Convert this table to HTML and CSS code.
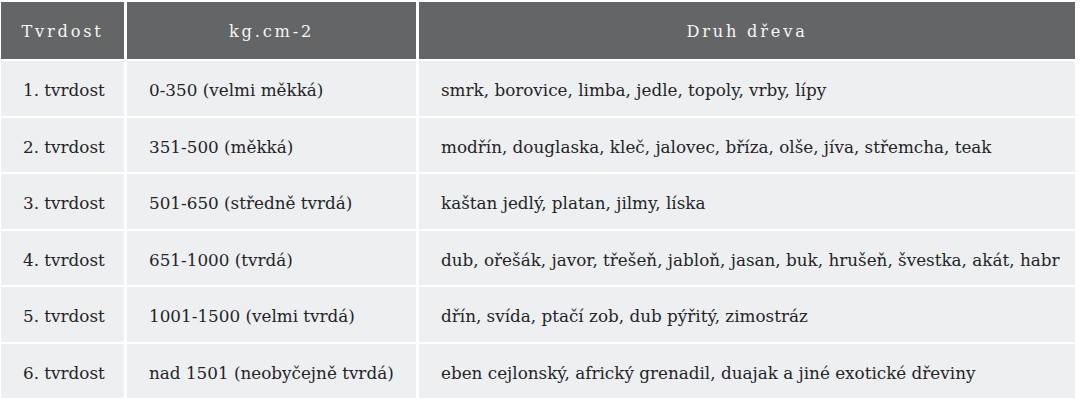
FILE: index.html
```html
<!DOCTYPE html>
<html lang="cs">
<head>
<meta charset="utf-8">
<title>Tvrdost dřeva</title>
<link rel="stylesheet" href="styles.css">
</head>
<body>
<table class="hardness">
  <thead>
    <tr>
      <th class="c1">Tvrdost</th>
      <th class="c2">kg.cm-2</th>
      <th class="c3">Druh dřeva</th>
    </tr>
  </thead>
  <tbody>
    <tr><td>1. tvrdost</td><td>0-350 (velmi měkká)</td><td>smrk, borovice, limba, jedle, topoly, vrby, lípy</td></tr>
    <tr><td>2. tvrdost</td><td>351-500 (měkká)</td><td>modřín, douglaska, kleč, jalovec, bříza, olše, jíva, střemcha, teak</td></tr>
    <tr><td>3. tvrdost</td><td>501-650 (středně tvrdá)</td><td>kaštan jedlý, platan, jilmy, líska</td></tr>
    <tr><td>4. tvrdost</td><td>651-1000 (tvrdá)</td><td>dub, ořešák, javor, třešeň, jabloň, jasan, buk, hrušeň, švestka, akát, habr</td></tr>
    <tr><td>5. tvrdost</td><td>1001-1500 (velmi tvrdá)</td><td>dřín, svída, ptačí zob, dub pýřitý, zimostráz</td></tr>
    <tr><td>6. tvrdost</td><td>nad 1501 (neobyčejně tvrdá)</td><td>eben cejlonský, africký grenadil, duajak a jiné exotické dřeviny</td></tr>
  </tbody>
</table>
</body>
</html>
```
FILE: styles.css
```css
html, body {
  background: #ffffff;
}
body {
  margin: 0;
  padding: 2px 0 0 1px;
  font-family: "DejaVu Serif", "Liberation Serif", serif;
}
.hardness {
  border-collapse: separate;
  border-spacing: 0;
  table-layout: fixed;
  width: 1074px;
}
.hardness th,
.hardness td {
  padding: 0;
  vertical-align: middle;
  white-space: nowrap;
  border-left: 3px solid #ffffff;
  border-top: 2px solid #ffffff;
}
.hardness th:first-child,
.hardness td:first-child {
  border-left: 0;
}
.hardness thead th {
  border-top: 0;
  height: 55px;
  background: #646566;
  color: #f6f6f6;
  font-weight: normal;
  font-size: 16.2px;
  letter-spacing: 2.8px;
  text-align: center;
  padding-top: 2px;
}
.hardness .c1 { width: 123px; }
.hardness .c2 { width: 289px; }
.hardness td {
  height: 50.5px;
  background: #eeeff0;
  color: #242528;
  font-size: 16.8px;
  text-align: left;
  padding: 4px 0 0 22px;
}
```
